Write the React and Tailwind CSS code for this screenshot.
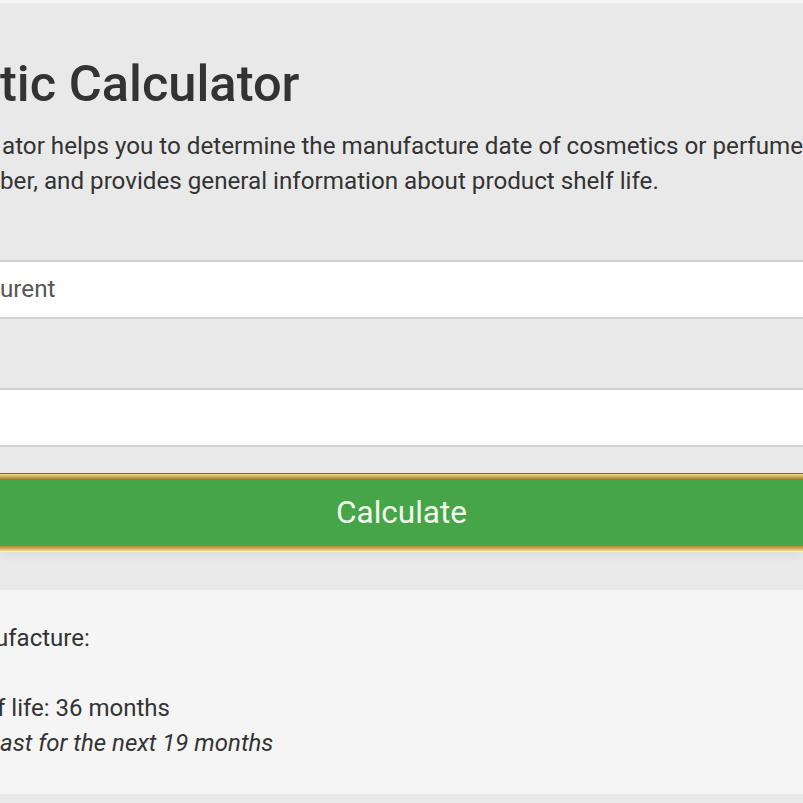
import React from "react";

export default function App() {
  return (
    <div className="w-[803px] h-[803px] overflow-hidden bg-[#e9e9e9] text-[#333] font-['Roboto','Liberation_Sans',sans-serif] flex flex-col">
      <div className="h-[3px] bg-[#f6f6f6] shrink-0" />
      <h1 className="mt-[51px] text-[50.6px] leading-[60px] font-medium whitespace-nowrap text-[#333]">
        tic Calculator
      </h1>
      <p className="mt-[15px] text-[24.2px] leading-[35px] whitespace-nowrap text-[#333]">
        <span className="block pl-[2px]">ator helps you to determine the manufacture date of cosmetics or perfume by</span>
        <span className="block">ber, and provides general information about product shelf life.</span>
      </p>

      <div className="mt-[61px] h-[59px] shrink-0 bg-white border-y-2 border-[#d0d0d0] flex items-center">
        <input
          readOnly
          value="urent"
          className="w-full bg-transparent outline-none text-[24.2px] text-[#555] p-0 font-['Roboto','Liberation_Sans',sans-serif]"
        />
      </div>

      <div className="mt-[69px] h-[59px] shrink-0 bg-white border-y-2 border-[#d0d0d0]" />

      <button className="mt-[26px] h-[79px] shrink-0 w-full flex flex-col shadow-[0_5px_8px_rgba(0,0,0,0.04)]">
        <div className="h-[1px] w-full bg-[#5d7b34]" />
        <div className="h-[5px] w-full bg-gradient-to-b from-[#f3d88a] to-[#a98a22]" />
        <div className="flex-1 w-full bg-[#46a548] flex items-center justify-center text-[31.5px] text-[#f2fbec] font-['Roboto','Liberation_Sans',sans-serif]">
          Calculate
        </div>
        <div className="h-[5px] w-full bg-gradient-to-b from-[#a98a22] to-[#f3d88a]" />
        <div className="h-[1px] w-full bg-[#fff7d2]" />
      </button>

      <div className="mt-[38px] h-[204px] shrink-0 bg-[#f5f5f5] pt-[31px] text-[24px] leading-[35px] text-[#333] whitespace-nowrap">
        <div className="-ml-[5px]">ufacture:</div>
        <div className="h-[35px]" />
        <div className="-ml-[3px]">f life: 36 months</div>
        <div className="italic">ast for the next 19 months</div>
      </div>
    </div>
  );
}
